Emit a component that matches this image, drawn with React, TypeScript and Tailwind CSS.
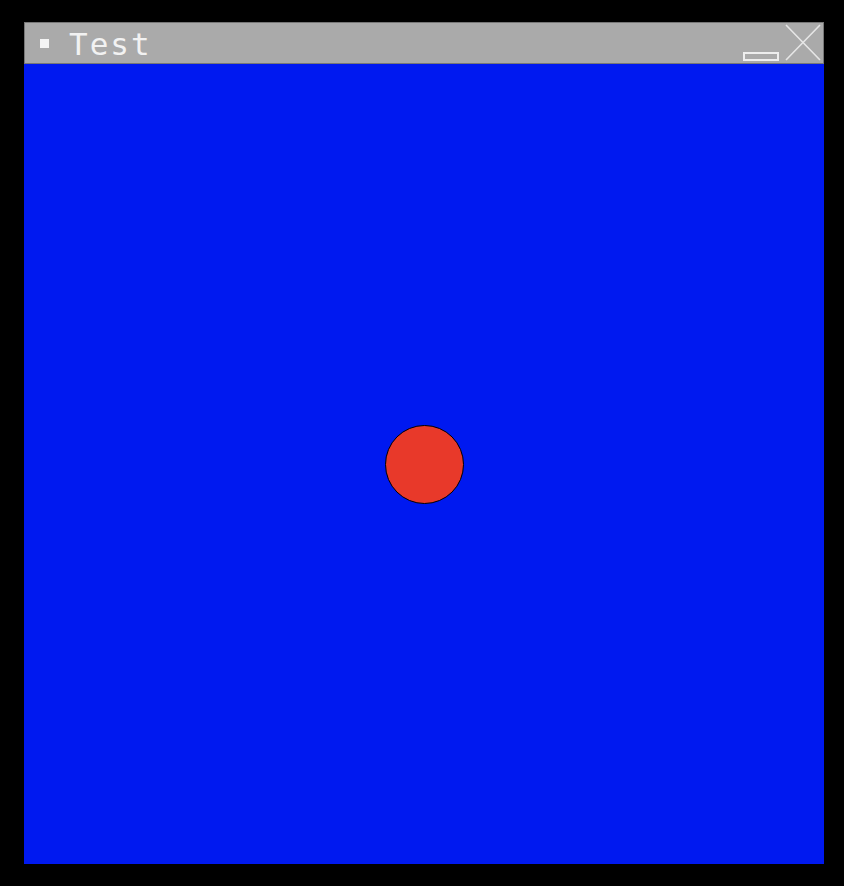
export default function App() {
  return (
    <div className="w-[844px] h-[886px] bg-black pt-[22px] pl-[24px]">
      <div className="w-[800px] flex flex-col">
        {/* title bar */}
        <div className="h-[42px] bg-[#aaaaaa] border border-[#777] flex items-center pl-[15px] pr-[2px]">
          <span className="w-[9px] h-[9px] bg-[#f4f4f4] mt-[1px]" />
          <span className="ml-[20px] text-[31px] leading-none tracking-[2px] text-[#f2f2f2] font-['DejaVu_Sans_Mono',monospace] mt-[2px]">
            Test
          </span>
          <div className="ml-auto flex items-end h-full pb-[1px]">
            <span className="w-[36px] h-[9px] border-2 border-[#eeeeee] mb-[1px] mr-[6px]" />
            <svg width="36" height="37" viewBox="0 0 36 37" className="mb-[1px]">
              <path d="M1 1 L35 36 M35 1 L1 36" stroke="#e6e6e6" strokeWidth="1.6" fill="none" />
            </svg>
          </div>
        </div>
        {/* canvas */}
        <div className="h-[800px] bg-[#0019f0] flex items-center justify-center">
          <div className="w-[79px] h-[79px] rounded-full bg-[#e8392a] border border-black" />
        </div>
      </div>
    </div>
  );
}
